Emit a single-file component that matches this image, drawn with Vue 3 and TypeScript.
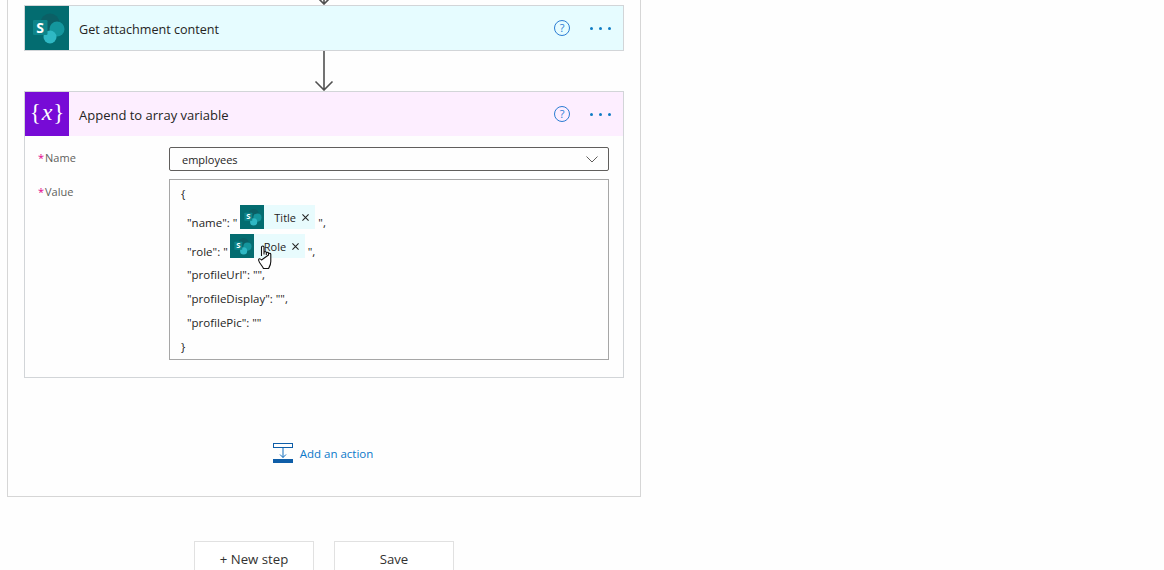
<script setup lang="ts">
interface Line { text: string }
const plainLines: Line[] = [
  { text: '"profileUrl": "",' },
  { text: '"profileDisplay": "",' },
  { text: '"profilePic": ""' },
]
</script>

<template>
  <div class="page">
    <section class="panel">
      <div class="tip">
        <svg width="20" height="5" viewBox="0 35 20 5" class="arrow-svg">
          <path d="M10 0V39M1.5 30.5L10 39L18.5 30.5" fill="none" stroke="#505050" stroke-width="1.6" />
        </svg>
      </div>

      <article class="card">
        <header class="head head-teal">
          <span class="logo logo-teal">
            <svg width="44" height="44" viewBox="0 0 44 44">
              <circle cx="25" cy="17" r="9.5" fill="#0b5f65" />
              <circle cx="32" cy="23" r="7.5" fill="#14969d" />
              <circle cx="25" cy="31" r="6.5" fill="#2fb8c4" />
              <rect x="8" y="14" width="14.5" height="15" rx="1.2" fill="#0d858a" />
              <text x="15.2" y="26.5" class="logo-s">S</text>
            </svg>
          </span>
          <span class="title">Get attachment content</span>
          <span class="help">?</span>
          <span class="more"><i></i><i></i><i></i></span>
        </header>
      </article>

      <div class="connector">
        <svg width="20" height="40" viewBox="0 0 20 40" class="arrow-svg">
          <path d="M10 0V39M1.5 30.5L10 39L18.5 30.5" fill="none" stroke="#505050" stroke-width="1.6" />
        </svg>
      </div>

      <article class="card">
        <header class="head head-purple">
          <span class="logo logo-purple">
            <span class="brace">{</span><span class="var-x">x</span><span class="brace">}</span>
          </span>
          <span class="title title-wide">Append to array variable</span>
          <span class="help">?</span>
          <span class="more"><i></i><i></i><i></i></span>
        </header>

        <div class="form">
          <div class="field field-name">
            <label class="label"><span class="req">*</span>Name</label>
            <div class="select">
              <span>employees</span>
              <svg width="12" height="7" viewBox="0 0 12 7">
                <path d="M0.5 0.5L6 6L11.5 0.5" fill="none" stroke="#605e5c" stroke-width="1" />
              </svg>
            </div>
          </div>
          <div class="field">
            <label class="label label-value"><span class="req">*</span>Value</label>
            <div class="editor">
              <div class="row row-brace">{</div>
              <div class="row row-token indent">
                <span class="txt">"name": "</span>
                <span class="token token-first">
                  <span class="token-logo">
                    <svg width="24" height="24" viewBox="0 0 44 44">
                      <circle cx="25" cy="17" r="9.5" fill="#0b5f65" />
                      <circle cx="32" cy="23" r="7.5" fill="#14969d" />
                      <circle cx="25" cy="31" r="6.5" fill="#2fb8c4" />
                      <rect x="8" y="14" width="14.5" height="15" rx="1.2" fill="#0d858a" />
                      <text x="15.2" y="26.5" class="logo-s">S</text>
                    </svg>
                  </span>
                  <span class="token-label">Title</span>
                  <svg class="token-x" width="7" height="7" viewBox="0 0 8 8">
                    <path d="M0.5 0.5L7.5 7.5M7.5 0.5L0.5 7.5" stroke="#222" stroke-width="1.2" />
                  </svg>
                </span>
                <span class="txt txt-after">",</span>
              </div>
              <div class="row row-token indent">
                <span class="txt">"role": "</span>
                <span class="token">
                  <span class="token-logo">
                    <svg width="24" height="24" viewBox="0 0 44 44">
                      <circle cx="25" cy="17" r="9.5" fill="#0b5f65" />
                      <circle cx="32" cy="23" r="7.5" fill="#14969d" />
                      <circle cx="25" cy="31" r="6.5" fill="#2fb8c4" />
                      <rect x="8" y="14" width="14.5" height="15" rx="1.2" fill="#0d858a" />
                      <text x="15.2" y="26.5" class="logo-s">S</text>
                    </svg>
                  </span>
                  <span class="token-label">Role</span>
                  <svg class="token-x" width="7" height="7" viewBox="0 0 8 8">
                    <path d="M0.5 0.5L7.5 7.5M7.5 0.5L0.5 7.5" stroke="#222" stroke-width="1.2" />
                  </svg>
                  <svg class="hand" width="16" height="25" viewBox="0 0 16 25">
                    <path d="M3.5 11V2.2C3.5 0.6 6 0.6 6 2.2V9.5M6 9V7.5C6 6.2 8.3 6.2 8.3 7.5V10M8.3 9.5V8.2C8.3 7 10.5 7 10.5 8.2V10.5M10.5 10V9.2C10.5 8 12.8 8 12.8 9.2V16.5C12.8 20 11.5 21.5 10.5 23.5H5.5C4.5 21 1.2 18 0.7 15.5C0.3 13.5 2 13 3.5 15Z"
                      fill="#fff" stroke="#111" stroke-width="1.1" stroke-linejoin="round" />
                  </svg>
                </span>
                <span class="txt txt-after">",</span>
              </div>
              <div v-for="line in plainLines" :key="line.text" class="row indent">{{ line.text }}</div>
              <div class="row">}</div>
            </div>
          </div>
        </div>
      </article>

      <div class="add-action">
        <svg width="20" height="20" viewBox="0 0 20 20">
          <rect x="0.5" y="0.5" width="19" height="4" fill="none" stroke="#0f5ea8" stroke-width="1" />
          <path d="M10 5V14.5M7 11.5L10 14.5L13 11.5" fill="none" stroke="#0f6cbd" stroke-width="1" />
          <rect x="0" y="16" width="20" height="4" fill="#0f5ea8" />
        </svg>
        <span>Add an action</span>
      </div>
    </section>

    <div class="buttons">
      <button class="btn" type="button">+ New step</button>
      <button class="btn" type="button">Save</button>
    </div>
  </div>
</template>

<style>
html, body { margin: 0; background: #fefefe; }
</style>

<style scoped>
.page {
  width: 1164px;
  height: 570px;
  overflow: hidden;
  background: #fefefe;
  font-family: "Open Sans", "Noto Sans", sans-serif;
  color: #252423;
}
.panel {
  box-sizing: border-box;
  width: 634px;
  height: 497px;
  margin-left: 7px;
  padding: 0 16px;
  border: 1px solid #d6d6d6;
  border-top: 0;
  display: flex;
  flex-direction: column;
}
.tip {
  height: 5px;
  display: flex;
  justify-content: center;
  overflow: hidden;
}
.arrow-svg { display: block; }
.card {
  border: 1px solid #d2d5d8;
  width: 600px;
  box-sizing: border-box;
  flex: none;
}
.head {
  height: 44px;
  display: flex;
  align-items: center;
}
.head-teal { background: #e6fcff; }
.head-purple { background: #fdeeff; }
.logo {
  width: 44px;
  height: 44px;
  flex: none;
  display: flex;
  align-items: center;
  justify-content: center;
}
.logo-teal { background: #036c70; }
.logo-purple { background: #770bd6; color: #fff; gap: 1px; }
.logo svg, .token-logo svg { display: block; }
.logo-s {
  fill: #fff;
  font: 700 14px "Open Sans", sans-serif;
  text-anchor: middle;
}
.brace {
  font: 400 23px/1 "Liberation Serif", serif;
  margin-top: -3px;
}
.var-x {
  font: italic 24px/1 "Liberation Serif", serif;
  margin-top: -5px;
}
.title {
  margin-left: 10px;
  padding-top: 2px;
  flex: 1;
  font-size: 12.6px;
}
.title-wide {
  font-size: 13px;
}
.help {
  width: 14px;
  height: 14px;
  border: 1px solid #2b7cd3;
  border-radius: 50%;
  color: #2b7cd3;
  font-size: 11px;
  line-height: 14px;
  text-align: center;
  flex: none;
}
.more {
  display: flex;
  gap: 6px;
  margin: 0 12px 0 20px;
}
.more i {
  width: 3px;
  height: 3px;
  border-radius: 50%;
  background: #0f7cc4;
  display: block;
}
.connector {
  height: 40px;
  flex: none;
  display: flex;
  justify-content: center;
}
.form {
  padding: 11px 14px 17px 13px;
}
.field {
  display: flex;
}
.field-name {
  margin-bottom: 8px;
}
.label {
  width: 131px;
  flex: none;
  font-size: 11px;
  line-height: 22px;
  color: #605e5c;
}
.label-value {
  padding-top: 2px;
}
.req {
  color: #e3008c;
  margin-right: 1px;
}
.select {
  box-sizing: border-box;
  width: 440px;
  height: 24px;
  border: 1px solid #605e5c;
  border-radius: 2px;
  display: flex;
  align-items: center;
  justify-content: space-between;
  padding: 0 10px 0 12px;
  font-size: 11px;
  color: #252423;
}
.editor {
  box-sizing: border-box;
  width: 440px;
  height: 181px;
  border: 1px solid #a6a6a6;
  padding: 2px 11px 0;
  font-size: 11.5px;
  color: #252423;
}
.row {
  height: 24px;
  line-height: 24px;
  white-space: pre;
}
.row-brace {
  height: 23px;
}
.row-token {
  height: 29px;
  display: flex;
  align-items: flex-start;
}
.indent {
  padding-left: 6px;
}
.txt {
  margin-top: 6px;
}
.txt-after {
  margin-left: 3px;
}
.token {
  position: relative;
  width: 75px;
  height: 24px;
  flex: none;
  display: flex;
  align-items: center;
  background: #e8fbfd;
  line-height: 1;
  margin-left: 2px;
}
.token-first {
  margin-left: 3px;
}
.token-logo {
  width: 24px;
  height: 24px;
  background: #036c70;
  flex: none;
}
.token-label {
  margin-left: 10px;
  width: 28px;
  font-size: 11px;
}
.token-x {
  flex: none;
}
.hand {
  position: absolute;
  left: 28px;
  top: 11px;
}
.add-action {
  margin-top: 65px;
  margin-right: 2px;
  display: flex;
  align-items: center;
  justify-content: center;
  gap: 7px;
  font-size: 11.5px;
  color: #0b78c9;
}
.add-action svg { flex: none; }
.buttons {
  display: flex;
  gap: 20px;
  margin: 44px 0 0 194px;
}
.btn {
  box-sizing: border-box;
  width: 120px;
  height: 36px;
  border: 1px solid #e1e1e1;
  background: #fff;
  color: #323130;
  font-family: inherit;
  font-size: 13.2px;
  padding: 0;
}
</style>
